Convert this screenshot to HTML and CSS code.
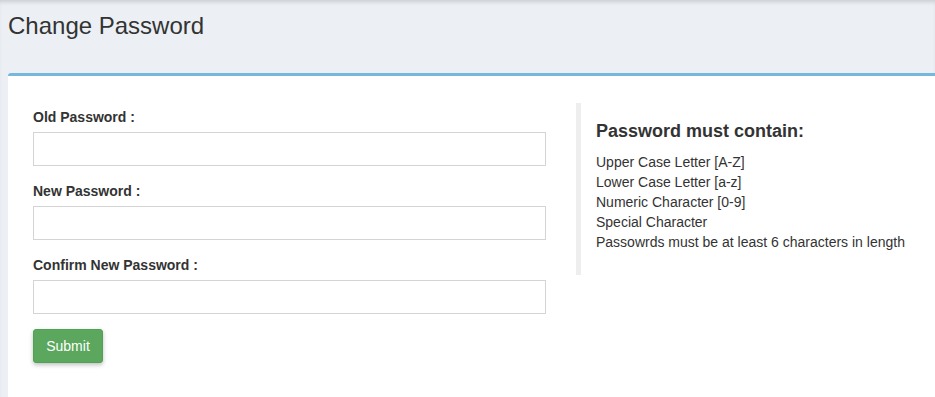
FILE: index.html
```html
<!DOCTYPE html>
<html lang="en">
<head>
    <meta charset="UTF-8">
    <meta name="viewport" content="width=device-width, initial-scale=1.0">
    <title>Change Password</title>
    <link rel="stylesheet" href="styles.css">
</head>
<body>

<div class="content-header">
    <h1>Change Password</h1>
</div>

<div class="box">
    <div class="box-body">
        <form class="form" onsubmit="return false;">
            <div class="form-group">
                <label for="oldPassword">Old Password :</label>
                <input type="password" id="oldPassword">
            </div>
            <div class="form-group">
                <label for="newPassword">New Password :</label>
                <input type="password" id="newPassword">
            </div>
            <div class="form-group">
                <label for="confirmPassword">Confirm New Password :</label>
                <input type="password" id="confirmPassword">
            </div>
            <button type="submit" class="btn-submit">Submit</button>
        </form>

        <blockquote class="rules">
            <h4>Password must contain:</h4>
            <div>Upper Case Letter [A-Z]</div>
            <div>Lower Case Letter [a-z]</div>
            <div>Numeric Character [0-9]</div>
            <div>Special Character</div>
            <div>Passowrds must be at least 6 characters in length</div>
        </blockquote>
    </div>
</div>

</body>
</html>
```

FILE: styles.css
```css
html, body {
    margin: 0;
    padding: 0;
    height: 100%;
    overflow: hidden;
}

body {
    font-family: "Liberation Sans", Arial, sans-serif;
    font-size: 14px;
    line-height: 20px;
    color: #333;
    background-color: #ecf0f5;
    box-shadow: inset 0 4px 4px -2px rgba(0, 0, 0, 0.15);
}

.content-header {
    padding: 13px 8px 0;
    height: 60px;
}

.content-header h1 {
    margin: 0;
    font-size: 24px;
    font-weight: normal;
    line-height: 26px;
}

.box {
    margin-left: 8px;
    min-height: 330px;
    background-color: #fff;
    border-top: 3px solid #78b7dc;
    border-radius: 3px 0 0 0;
}

.box-body {
    display: grid;
    grid-template-columns: 513px 1fr;
    column-gap: 30px;
    align-items: start;
    padding: 31px 0 20px 25px;
}

.form-group {
    margin-bottom: 15px;
}

.form-group label {
    display: block;
    font-weight: bold;
    margin-bottom: 5px;
}

.form-group input {
    display: block;
    box-sizing: border-box;
    width: 100%;
    height: 34px;
    border: 1px solid #d4d4d4;
    padding: 6px 12px;
    font-family: inherit;
    font-size: 14px;
}

.btn-submit {
    background-color: #5aa75d;
    border: 1px solid #52a155;
    border-radius: 3px;
    color: #fff;
    font-family: inherit;
    font-size: 14px;
    width: 70px;
    height: 34px;
    padding: 0;
    box-shadow: 0 2px 4px rgba(0, 0, 0, 0.25);
}

.rules {
    margin: -4px 0 0;
    padding: 10px 20px 23px 15px;
    border-left: 5px solid #eee;
}

.rules h4 {
    margin: 5px 0 8px;
    font-size: 18px;
    line-height: 26px;
    font-weight: bold;
}
```
